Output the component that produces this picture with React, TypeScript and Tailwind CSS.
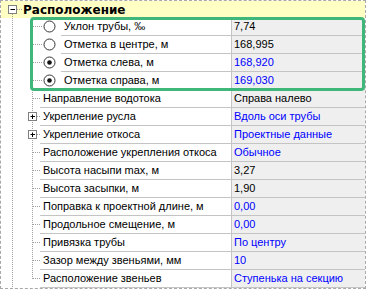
import React from 'react';

type Row = {
  label: string;
  value: string;
  blue?: boolean;
  radio?: boolean;
  checked?: boolean;
  plus?: boolean;
  last?: boolean;
};

const rows: Row[] = [
  { label: 'Уклон трубы, ‰', value: '7,74', radio: true },
  { label: 'Отметка в центре, м', value: '168,995', radio: true },
  { label: 'Отметка слева, м', value: '168,920', blue: true, radio: true, checked: true },
  { label: 'Отметка справа, м', value: '169,030', blue: true, radio: true, checked: true },
  { label: 'Направление водотока', value: 'Справа налево' },
  { label: 'Укрепление русла', value: 'Вдоль оси трубы', blue: true, plus: true },
  { label: 'Укрепление откоса', value: 'Проектные данные', blue: true, plus: true },
  { label: 'Расположение укрепления откоса', value: 'Обычное', blue: true },
  { label: 'Высота насыпи max, м', value: '3,27' },
  { label: 'Высота засыпки, м', value: '1,90' },
  { label: 'Поправка к проектной длине, м', value: '0,00', blue: true },
  { label: 'Продольное смещение, м', value: '0,00', blue: true },
  { label: 'Привязка трубы', value: 'По центру', blue: true },
  { label: 'Зазор между звеньями, мм', value: '10', blue: true },
  { label: 'Расположение звеньев', value: 'Ступенька на секцию', blue: true, last: true },
];

const dot = '#a0a0a0';

function Gutter({ row }: { row: Row }) {
  const w = row.radio ? 60 : 39;
  return (
    <svg width={w} height={18} className="shrink-0 block">
      {/* ствол дерева */}
      <line x1={11.5} y1={0} x2={11.5} y2={18} stroke={dot} strokeDasharray="1 1" />
      <line x1={31.5} y1={0} x2={31.5} y2={row.last ? 9 : 18} stroke={dot} strokeDasharray="1 1" />
      <line x1={32} y1={8.5} x2={row.radio ? 42 : w} y2={8.5} stroke={dot} strokeDasharray="1 1" />
      {row.plus && (
        <g>
          <rect x={27.5} y={4.5} width={8} height={8} fill="#fff" stroke="#808080" />
          <line x1={29.5} y1={8.5} x2={34} y2={8.5} stroke="#000" />
          <line x1={31.5} y1={6.5} x2={31.5} y2={11} stroke="#000" />
        </g>
      )}
      {row.radio && (
        <g>
          <circle cx={48.5} cy={8.5} r={5.5} fill="#fff" stroke="#333" />
          {row.checked && <circle cx={48.5} cy={8.5} r={2.3} fill="#111" />}
        </g>
      )}
    </svg>
  );
}

export default function App() {
  return (
    <div
      className="relative w-[366px] h-[289px] bg-white border border-dashed border-[#a8a8a8] overflow-hidden text-[11px] leading-none text-black"
      style={{ fontFamily: '"Liberation Sans", Arial, sans-serif' }}
    >
      {/* Заголовок группы */}
      <div className="flex h-[17px] bg-[#ffffc4] items-center">
        <svg width={21} height={17} className="shrink-0 block">
          <line x1={11.5} y1={13} x2={11.5} y2={17} stroke={dot} strokeDasharray="1 1" />
          <line x1={16} y1={8.5} x2={21} y2={8.5} stroke={dot} strokeDasharray="1 1" />
          <rect x={7.5} y={4.5} width={8} height={8} fill="#fff" stroke="#808080" />
          <line x1={9.5} y1={8.5} x2={14} y2={8.5} stroke="#000" />
        </svg>
        <span
          className="font-bold pl-[1px] text-[12px]"
          style={{ fontFamily: '"DejaVu Sans", Verdana, sans-serif' }}
        >
          Расположение
        </span>
      </div>

      {rows.map((r) => (
        <div key={r.label} className="flex h-[18px]">
          <div className="flex w-[230px] shrink-0">
            <Gutter row={r} />
            <div className="flex-1 flex items-center border-b border-[#c4c4c4] pl-[3px] whitespace-nowrap overflow-hidden">
              {r.label}
            </div>
          </div>
          <div
            className={`flex-1 flex items-center bg-[#efefef] border-l border-b border-[#c4c4c4] pl-[2px] whitespace-nowrap ${
              r.blue ? 'text-[#0000ff]' : 'text-black'
            }`}
          >
            {r.value}
          </div>
        </div>
      ))}

      {/* Выделение рамкой */}
      <div className="absolute left-[29px] top-[16px] w-[335px] h-[74px] border-[3px] border-[#3fb67a] rounded-[4px] pointer-events-none" />
    </div>
  );
}
